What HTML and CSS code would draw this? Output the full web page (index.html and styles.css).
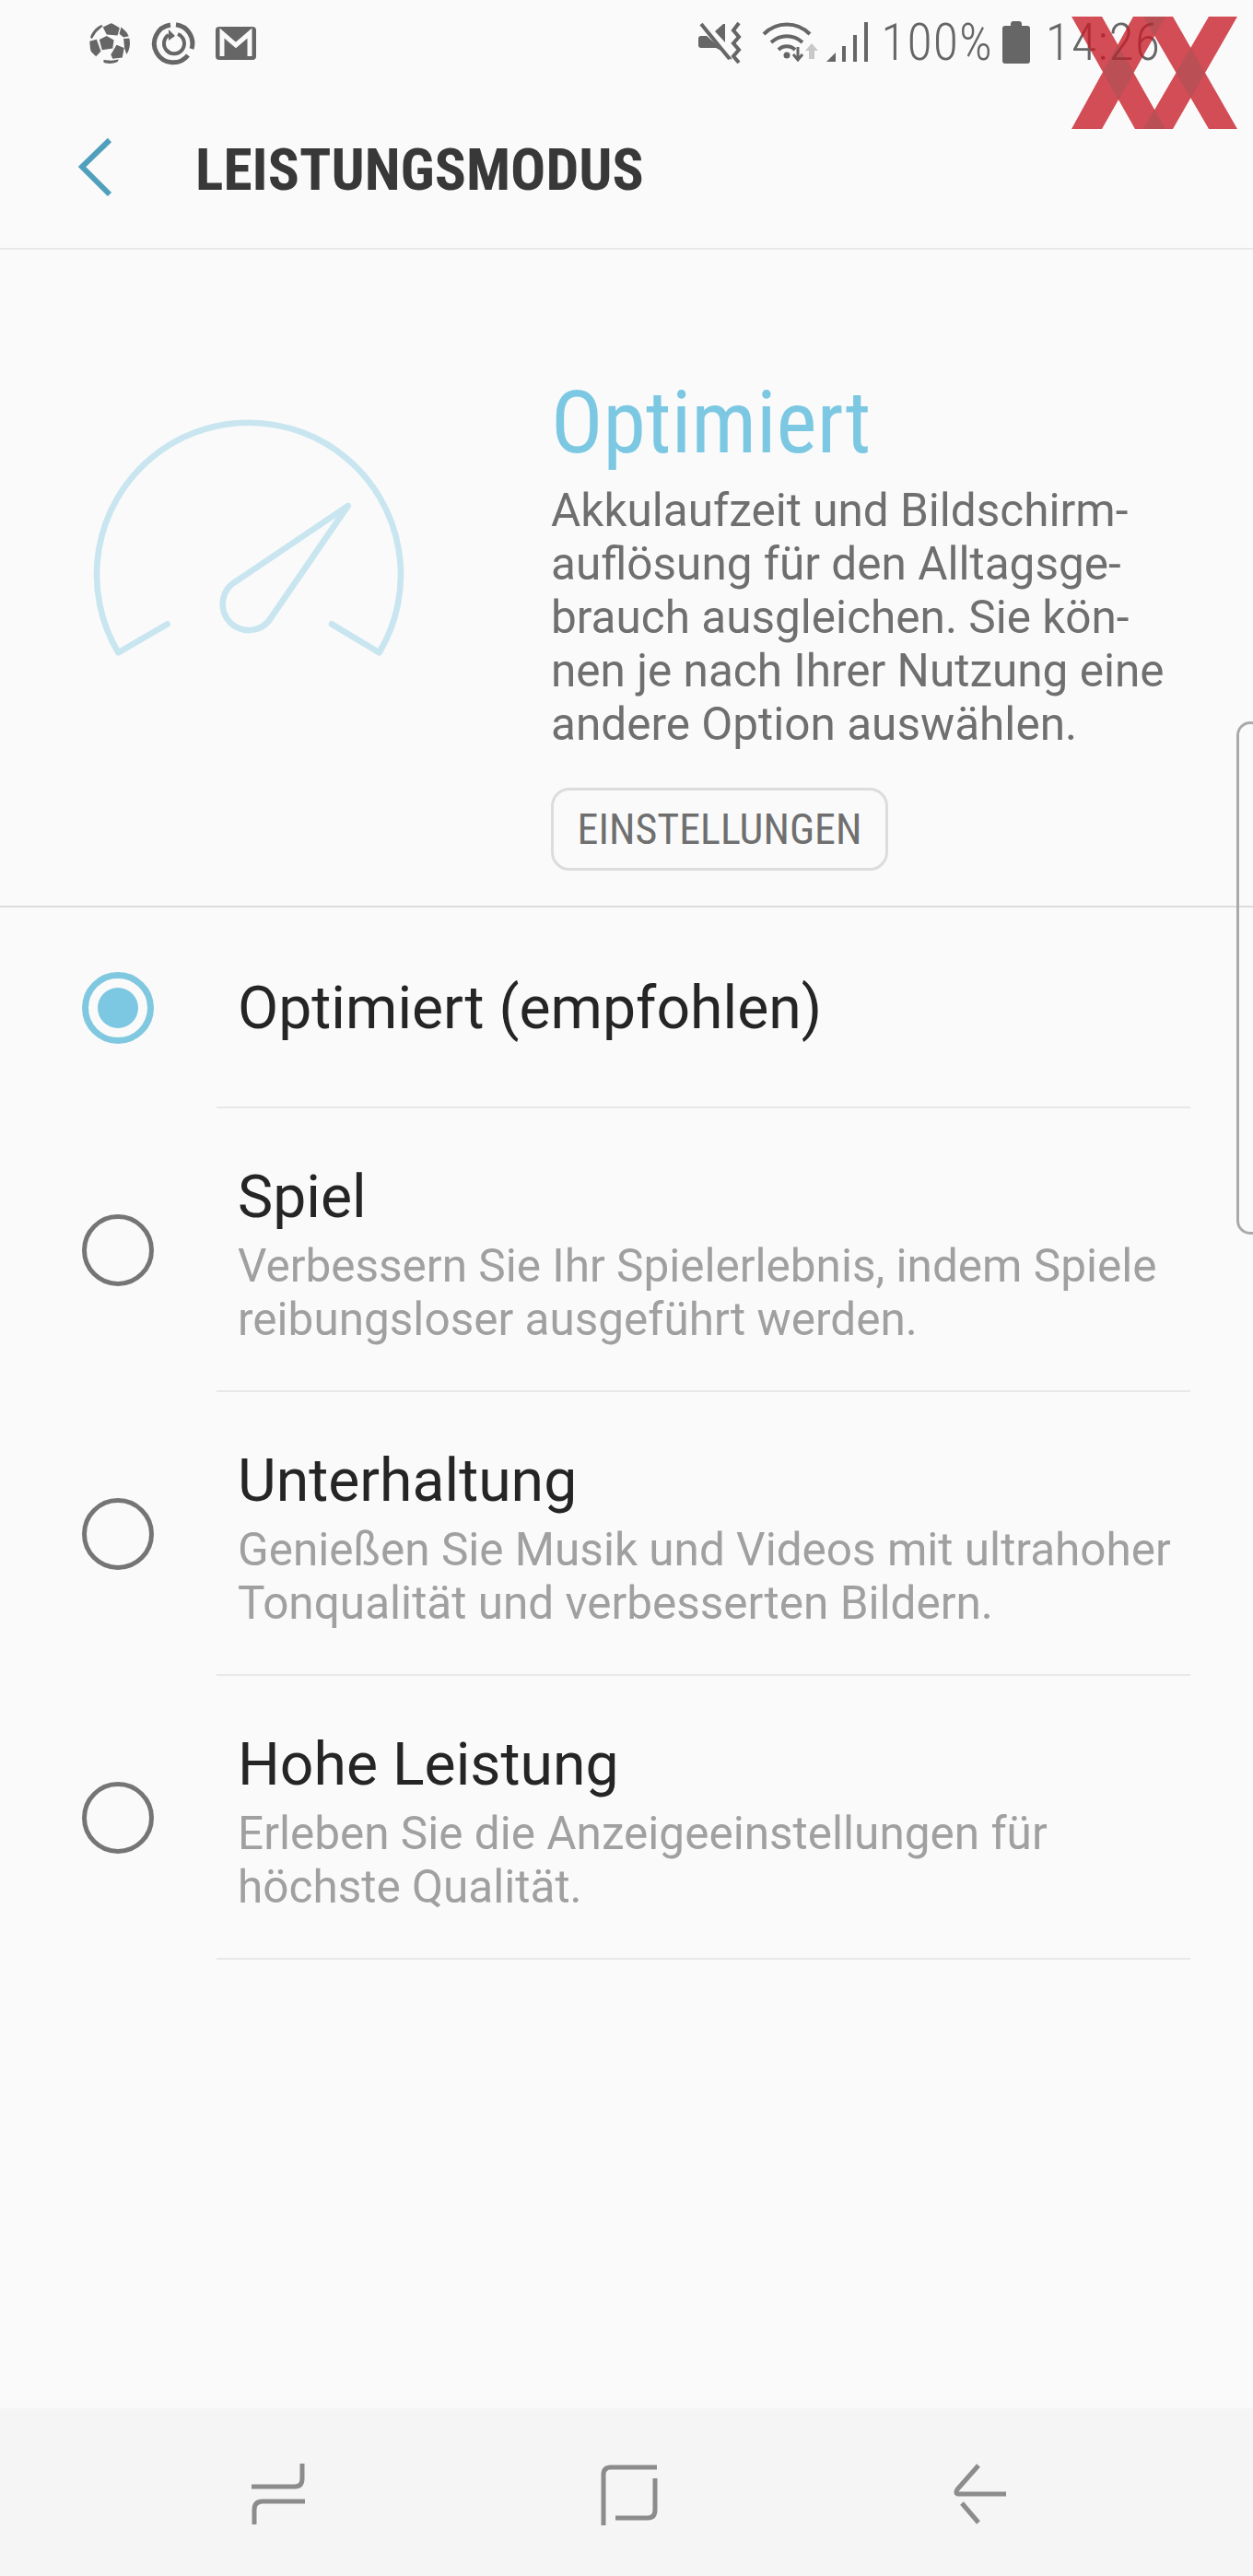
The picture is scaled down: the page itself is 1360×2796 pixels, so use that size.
FILE: index.html
```html
<!DOCTYPE html>
<html lang="de">
<head>
  <meta charset="UTF-8">
  <title>Leistungsmodus</title>
  <link rel="stylesheet" href="styles.css">
</head>
<body>
  <div class="phone">
    <div class="statusbar">
      <div class="status-left">
        <svg class="ic-ball" width="46" height="46" viewBox="110 65 140 140">
          <defs><clipPath id="ball"><circle cx="180" cy="135" r="67"/></clipPath></defs>
          <g fill="#666" clip-path="url(#ball)">
            <path d="M158 82 186 68 213 84 206 109 170 106Z"/>
            <path d="M146 123 170 111 194 124 190 152 155 157Z"/>
            <path d="M184 172 203 140 228 150 222 182 190 186Z"/>
            <path d="M114 128 137 122 151 162 135 178 116 160Z"/>
            <path d="M226 120 250 118 250 150 236 172 229 150Z"/>
            <path d="M160 190 186 192 210 188 200 210 160 210Z"/>
            <path d="M218 82 250 110 226 115 212 104Z"/>
            <path d="M110 112 122 120 136 98 158 78 140 65 110 90Z"/>
            <path d="M122 178 150 198 150 210 110 190Z"/>
          </g>
        </svg>
        <svg class="ic-sync" width="48" height="48" viewBox="0 0 48 48" fill="none" stroke="#666">
          <path stroke-width="5" d="M21 4A20.500 20.500 0 1 0 40 37M27 3.800A20.500 20.500 0 0 1 44 30"/>
          <path stroke-width="4" d="M19 15A11 11 0 1 0 29 14"/>
          <path fill="#666" stroke="none" d="M19 9l7 7-7 5z"/>
        </svg>
        <svg class="ic-mail" width="44" height="36" viewBox="0 0 44 36">
          <rect width="44" height="36" rx="4" fill="#666"/>
          <path fill="none" stroke="#fafafa" stroke-width="5" d="M7 32V7L22 20 37 7V32"/>
        </svg>
      </div>
      <div class="status-right">
        <svg class="ic-mute" width="48" height="46" viewBox="0 0 48 46" fill="none">
          <path fill="#666" d="M0 19q0-3 3-3h6l27 24v2L25 32 19 29H3q-3 0-3-3zM18 11 27 3h2v20z"/>
          <path stroke="#666" stroke-width="4" d="M3 3 34 41"/>
          <path stroke="#fafafa" stroke-width="2" d="M7 0 37 38"/>
          <path stroke="#666" stroke-width="4" d="M44 2 38 10 44 17 38 24 44 31 38 38 44 45"/>
        </svg>
        <svg class="ic-wifi" width="62" height="44" viewBox="0 0 62 44" fill="none">
          <path stroke="#666" stroke-width="4" d="M2 14C16 0 38 0 52 14M10 23C20 14 34 14 44 23M18 31C23 26 31 26 36 31"/>
          <circle cx="27" cy="37" r="3.500" fill="#666"/>
          <path stroke="#666" stroke-width="3" d="M39 28V40M34 36 39 42 44 36"/>
          <path fill="#c8c8c8" d="M54 24l7 8h-4v9h-6v-9h-4z"/>
        </svg>
        <svg class="ic-signal" width="46" height="44" viewBox="0 0 46 44" fill="#666">
          <path d="M0 44 10 34V44zM17 27h4V44h-4zM29 15h4V44h-4zM41 1h4V44h-4z"/>
        </svg>
        <span class="status-pct">100%</span>
        <svg class="ic-batt" width="30" height="46" viewBox="0 0 30 46">
          <path fill="#666" d="M9 3q0-3 3-3h6q3 0 3 3v2h6q3 0 3 3v35q0 3-3 3H3q-3 0-3-3V8q0-3 3-3h6z"/>
        </svg>
        <span class="status-time">14:26</span>
      </div>
    </div>

    <div class="titlebar">
      <svg class="back" width="40" height="66" viewBox="0 0 40 66" fill="none">
        <path stroke="#4f9fbd" stroke-width="6" d="M34 3 4 32 34 62"/>
      </svg>
      <h1>LEISTUNGSMODUS</h1>
    </div>

    <div class="hero">
      <svg class="gauge" width="400" height="300" viewBox="0 0 1200 900" fill="none" stroke="#c9e6f0" stroke-width="20" stroke-linecap="round" stroke-linejoin="round">
        <path d="M305 745 145 838A495 495 0 1 1 995 838L840 745"/>
        <path d="M893 360 515 615Q485 640 485 682A85 85 0 0 0 635 735Z"/>
      </svg>
      <div class="hero-text">
        <h2>Optimiert</h2>
        <p>Akkulaufzeit und Bildschirm-<br>auflösung für den Alltagsge-<br>brauch ausgleichen. Sie kön-<br>nen je nach Ihrer Nutzung eine<br>andere Option auswählen.</p>
        <button class="settings-btn">EINSTELLUNGEN</button>
      </div>
    </div>

    <div class="options">
      <div class="option option-first">
        <span class="radio radio-on"></span>
        <div class="option-body">
          <div class="option-title">Optimiert (empfohlen)</div>
        </div>
      </div>
      <div class="option">
        <span class="radio"></span>
        <div class="option-body">
          <div class="option-title">Spiel</div>
          <div class="option-desc">Verbessern Sie Ihr Spielerlebnis, indem Spiele<br>reibungsloser ausgeführt werden.</div>
        </div>
      </div>
      <div class="option">
        <span class="radio"></span>
        <div class="option-body">
          <div class="option-title">Unterhaltung</div>
          <div class="option-desc">Genießen Sie Musik und Videos mit ultrahoher<br>Tonqualität und verbesserten Bildern.</div>
        </div>
      </div>
      <div class="option">
        <span class="radio"></span>
        <div class="option-body">
          <div class="option-title">Hohe Leistung</div>
          <div class="option-desc">Erleben Sie die Anzeigeeinstellungen für<br>höchste Qualität.</div>
        </div>
      </div>
    </div>

    <div class="navbar">
      <svg width="66" height="74" viewBox="0 0 66 74" fill="none" stroke="#8c8c8c" stroke-width="5">
        <path d="M3 29H50Q58 29 58 20V4M61 45H15Q6 45 6 54V70"/>
      </svg>
      <svg width="66" height="74" viewBox="0 0 66 74" fill="none" stroke="#8c8c8c" stroke-width="5">
        <path d="M4 71V16Q4 8 12 8H62M60 20V54Q60 63 52 63H17"/>
      </svg>
      <svg width="66" height="74" viewBox="0 0 66 74" fill="none" stroke="#8c8c8c" stroke-width="5">
        <path d="M61 37H10Q5 37 8 32L31 6M13 47 31 68"/>
      </svg>
    </div>

    <div class="edge-handle"></div>
    <svg class="watermark" width="180" height="122" viewBox="0 0 180 122">
      <path class="wm-arms" d="M0 0H33L102 122H69ZM67 0H102L33 122H0ZM78 0H110L180 122H149ZM149 0H180L110 122H78Z"/>
      <path class="wm-cross" d="M50.300 30.500 67.500 61 51 90.200 34 60.100ZM129.400 33.700 145 61 129.400 88.200 113.500 61ZM78 0H102L90 21ZM90 101 102 122H78Z"/>
    </svg>
  </div>
</body>
</html>
```

FILE: styles.css
```css
html, body { margin: 0; padding: 0; }
body { font-family: Roboto, "Liberation Sans", sans-serif; background: #fafafa; }
.phone { position: relative; width: 1360px; height: 2796px; overflow: hidden; background: #fafafa; display: flex; flex-direction: column; }

.statusbar { height: 90px; display: flex; justify-content: space-between; align-items: flex-start; box-sizing: border-box; padding: 23px 100px 0 96px; }
.status-left { display: flex; align-items: center; gap: 22px; }
.status-right { display: flex; align-items: flex-start; color: #666; }
.ic-mute { margin-right: 21px; }
.ic-wifi { margin-right: 8px; }
.ic-signal { margin-right: 13px; }
.ic-batt { margin: 0 17px 0 10px; }
.status-pct, .status-time { font-size: 56px; line-height: 46px; font-weight: 350; font-stretch: 80%; letter-spacing: 1px; }

.titlebar { height: 181px; box-sizing: border-box; border-bottom: 2px solid #e8e8e8; display: flex; align-items: center; padding: 0 0 0 85px; }
.back { margin-right: 87px; margin-top: 4px; }
h1 { margin: 10px 0 0; font-size: 63.5px; font-weight: 700; font-stretch: 75%; color: #383838; }

.hero { height: 714px; box-sizing: border-box; border-bottom: 2px solid #dcdcdc; display: flex; }
.gauge { margin: 158px 118px 0 80px; flex: none; }
.hero-text { padding-top: 138px; }
h2 { margin: 0; font-size: 94px; line-height: 100px; font-weight: 400; font-stretch: 75%; color: #7cc8e2; }
.hero-text p { margin: 16px 0 0; font-size: 49.5px; line-height: 58px; color: #6f6f6f; font-stretch: 90%; }
.settings-btn { display: block; margin-top: 40px; width: 366px; height: 90px; padding: 0; background: none; border: 3px solid #dcdcdc; border-radius: 20px; font-family: inherit; font-size: 46px; font-stretch: 80%; color: #6f6f6f; }

.options { display: flex; flex-direction: column; }
.option { height: 308px; display: flex; align-items: center; padding-left: 89px; position: relative; }
.option-first { height: 218px; }
.option::after { content: ""; position: absolute; left: 235px; right: 68px; bottom: 0; height: 2px; background: #e8e8e8; }
.radio { width: 78px; height: 78px; box-sizing: border-box; border: 5px solid #757575; border-radius: 50%; flex: none; display: flex; align-items: center; justify-content: center; margin-right: 91px; }
.radio-on { border: 7px solid #7fc8e0; }
.radio-on::before { content: ""; width: 44px; height: 44px; border-radius: 50%; background: #7cc8e2; }
.option + .option .option-body { padding-top: 10px; }
.option-title { font-size: 64.3px; line-height: 72px; color: #252525; }
.option-desc { font-size: 49.5px; line-height: 58px; color: #a0a0a0; margin-top: 10px; }

.navbar { margin-top: auto; height: 182px; background: #f5f5f5; display: flex; justify-content: space-between; align-items: center; box-sizing: border-box; padding: 4px 263px 0 270px; }

.edge-handle { position: absolute; left: 1342px; top: 783px; width: 30px; height: 557px; box-sizing: border-box; border: 3px solid #aaa; border-radius: 18px; }
.watermark { position: absolute; left: 1163px; top: 18px; }
.wm-arms { fill: rgb(199, 28, 38); opacity: 0.78; }
.wm-cross { fill: #5a5a5a; opacity: 0.2; }
```
